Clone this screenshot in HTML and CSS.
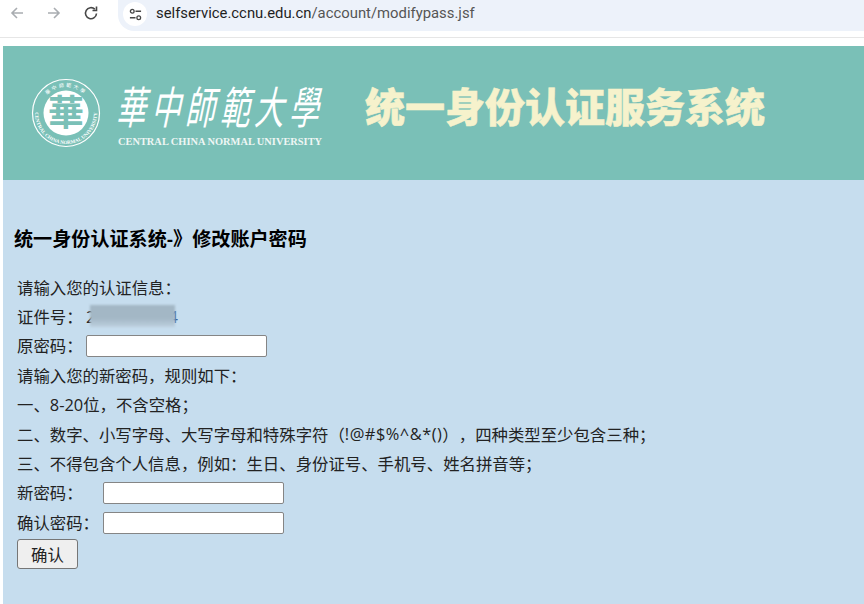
FILE: index.html
```html
<!DOCTYPE html>
<html lang="zh-CN">
<head>
    <meta charset="UTF-8">
    <title>修改账户密码</title>
    <link rel="stylesheet" href="styles.css">
</head>
<body>

    <div class="toolbar">
        <svg class="nav-icon" viewBox="0 0 16 16"><path d="M14 8H3M8 3L3 8l5 5" class="faded"/></svg>
        <svg class="nav-icon" viewBox="0 0 16 16"><path d="M2 8h11M8 3l5 5-5 5" class="faded"/></svg>
        <svg class="nav-icon" viewBox="0 0 16 16"><path d="M13.5 8.5a5.5 5.5 0 1 1-1.7-4.3M13.5 1.5v4h-4" class="dark"/></svg>
        <div class="omnibox">
            <div class="chip">
                <svg viewBox="0 0 14 14"><circle cx="3.5" cy="3.5" r="2"/><path d="M7 3.5h6M1 10.500h6"/><circle cx="10.500" cy="10.500" r="2"/></svg>
            </div>
            <span class="url">selfservice.ccnu.edu.cn<span class="url-path">/account/modifypass.jsf</span></span>
        </div>
    </div>

    <div class="page">
        <div class="banner">
            <svg class="seal" viewBox="0 0 70 70">
                <defs>
                    <path id="arc-top" d="M9 35a26 26 0 0 1 52 0"/>
                    <path id="arc-bottom" d="M5.900 24.400A31 31 0 1 0 64.100 24.400"/>
                </defs>
                <circle cx="35" cy="35" r="33.500" class="seal-ring"/>
                <circle cx="35" cy="35" r="22.500" class="seal-disc"/>
                <text class="seal-top"><textPath href="#arc-top" startOffset="50%">華中師範大學</textPath></text>
                <text class="seal-bottom"><textPath href="#arc-bottom" startOffset="50%">CENTRAL CHINA NORMAL UNIVERSITY</textPath></text>
                <text x="35" y="48" class="seal-mark">華</text>
            </svg>
            <div class="logo">
                <div class="logo-cn">
                    <span>華</span><span>中</span><span>師</span><span>範</span><span>大</span><span>學</span>
                </div>
                <div class="logo-en">CENTRAL CHINA NORMAL UNIVERSITY</div>
            </div>
            <div class="system-name">统一身份认证服务系统</div>
        </div>

        <div class="content">
            <h3>统一身份认证系统-》修改账户密码</h3>
            <form class="form">
                <div class="row">请输入您的认证信息：</div>
                <div class="row">
                    <label class="label">证件号：</label>
                    <span class="id-value">2<span class="mask"></span><span class="id-end">4</span></span>
                </div>
                <div class="row">
                    <label class="label">原密码：</label>
                    <input type="password">
                </div>
                <div class="row">请输入您的新密码，规则如下：</div>
                <div class="row">一、8-20位，不含空格；</div>
                <div class="row">二、数字、小写字母、大写字母和特殊字符（<span class="symbols">!@#$%^&amp;*()</span>），四种类型至少包含三种；</div>
                <div class="row">三、不得包含个人信息，例如：生日、身份证号、手机号、姓名拼音等；</div>
                <div class="row">
                    <label class="label label-wide">新密码：</label>
                    <input type="password">
                </div>
                <div class="row">
                    <label class="label label-wide">确认密码：</label>
                    <input type="password">
                </div>
                <button type="button">确认</button>
            </form>
        </div>
    </div>

</body>
</html>
```

FILE: styles.css
```css
html, body {
    margin: 0;
    padding: 0;
    background: white;
    overflow: hidden;
}
body {
    width: 864px;
    height: 604px;
    font-family: "Open Sans", "Noto Sans CJK SC", sans-serif;
    color: #222;
    text-spacing-trim: space-all;
}
.toolbar {
    display: flex;
    align-items: flex-start;
    height: 37px;
    border-bottom: 1px solid #e6e6e6;
    padding-left: 9px;
}
.nav-icon {
    width: 16px;
    height: 16px;
    margin-top: 5px;
    margin-right: 21px;
    flex: none;
    fill: none;
    stroke-width: 1.6;
}
.faded {
    stroke: #a9adb1;
}
.dark {
    stroke: #474747;
}
.omnibox {
    display: flex;
    align-items: center;
    flex: 1;
    height: 31px;
    margin-left: -2px;
    padding-left: 5px;
    background: #edf2fa;
    border-radius: 0 0 0 16px;
}
.chip {
    display: flex;
    align-items: center;
    justify-content: center;
    width: 24px;
    height: 24px;
    margin-right: 9px;
    margin-top: -3px;
    background: white;
    border-radius: 50%;
}
.chip svg {
    width: 13px;
    height: 13px;
    fill: none;
    stroke: #474747;
    stroke-width: 1.4;
}
.url {
    font-family: "Roboto", sans-serif;
    font-size: 14.850px;
    color: #1f1f1f;
    margin-top: -5px;
}
.url-path {
    color: #555;
}
.page {
    margin: 8px 0 0 3px;
    height: 558px;
    background: #c6ddee;
}
.banner {
    display: flex;
    align-items: flex-start;
    height: 134px;
    background: #7ac0b7;
    color: white;
}
.seal {
    width: 70px;
    height: 70px;
    margin: 32px 0 0 28px;
    flex: none;
}
.seal-ring {
    fill: none;
    stroke: white;
    stroke-width: 1.2;
}
.seal-disc {
    fill: white;
}
.seal-top {
    font-size: 5px;
    fill: white;
    text-anchor: middle;
    letter-spacing: 2px;
}
.seal-bottom {
    font-family: "Liberation Serif", serif;
    font-size: 5px;
    font-weight: bold;
    fill: white;
    text-anchor: middle;
}
.seal-mark {
    font-size: 36px;
    font-weight: bold;
    fill: #7ac0b7;
    text-anchor: middle;
}
.logo {
    width: 206px;
    margin: 29px 0 0 17px;
    flex: none;
}
.logo-cn {
    display: flex;
    justify-content: space-between;
    height: 61px;
    font-family: "Noto Sans CJK TC", sans-serif;
    font-size: 33px;
    line-height: 60px;
}
.logo-cn span {
    display: block;
    transform: skewX(-12deg) scale(0.9, 1.35);
}
.logo-en {
    font-family: "Liberation Serif", serif;
    font-size: 10.400px;
    font-weight: bold;
    line-height: 12px;
    white-space: nowrap;
    color: #eef6f4;
}
.system-name {
    margin: 34px 0 0 41px;
    font-family: "Noto Sans CJK SC", sans-serif;
    font-size: 40px;
    font-weight: 900;
    line-height: 50px;
    white-space: nowrap;
    color: #f6f2cc;
    -webkit-text-stroke: 0.5px #f6f2cc;
}
.content {
    padding-left: 11px;
}
h3 {
    margin: 48px 0 20px;
    font-size: 19.100px;
    line-height: 24px;
    font-weight: bold;
    color: #000;
    font-family: "Liberation Sans", "Noto Sans CJK SC", sans-serif;
}
.form {
    padding-left: 3px;
}
.row {
    display: flex;
    align-items: center;
    height: 29.400px;
    font-size: 16.400px;
    white-space: nowrap;
}
.symbols {
    letter-spacing: 0.5px;
}
.label {
    width: 69px;
    flex: none;
}
.label-wide {
    width: 86px;
}
.id-value {
    display: flex;
    align-items: center;
}
.mask {
    display: block;
    position: relative;
    z-index: 1;
    width: 85px;
    height: 22px;
    margin: 0 -7px 0 -5px;
    background: linear-gradient(#a3b7c5 60%, #bdd0df);
    filter: blur(1px);
}
.id-end {
    color: #3a5f94;
}
input {
    width: 181px;
    height: 22px;
    margin-top: 2px;
    padding: 0;
    box-sizing: border-box;
    background: white;
    border: 1px solid #858585;
    border-radius: 2px;
}
button {
    display: block;
    width: 61px;
    height: 30px;
    margin-top: 2px;
    padding: 0;
    font-family: "Noto Sans CJK SC", sans-serif;
    font-size: 16.400px;
    color: #222;
    background: #efefef;
    border: 1px solid #767676;
    border-radius: 3px;
}
```
